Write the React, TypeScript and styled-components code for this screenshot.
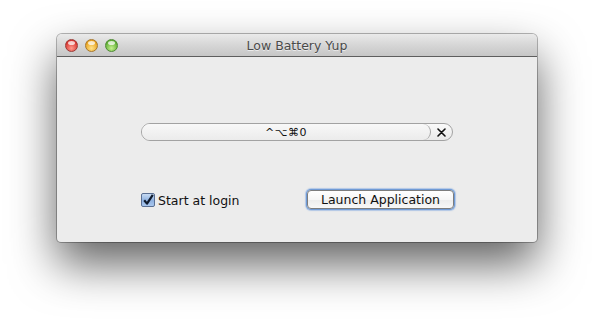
import React from "react";
import styled, { createGlobalStyle } from "styled-components";

const Global = createGlobalStyle`
  html, body { margin: 0; padding: 0; background: #ffffff; }
  body { font-family: "DejaVu Sans", "Liberation Sans", sans-serif; }
`;

const Page = styled.div`
  width: 594px;
  height: 321px;
  padding: 34px 0 0 57px;
  box-sizing: border-box;
  overflow: hidden;
`;

const Window = styled.div`
  width: 480px;
  height: 208px;
  border-radius: 5px 5px 4px 4px;
  background: #ececec;
  box-shadow: 0 0 0 1px rgba(0, 0, 0, 0.28), 0 22px 46px rgba(0, 0, 0, 0.62);
  display: flex;
  flex-direction: column;
  overflow: hidden;
`;

const TitleBar = styled.div`
  height: 23px;
  flex: none;
  box-sizing: border-box;
  border-bottom: 1px solid #5e5e5e;
  background: linear-gradient(#eaeaea, #d8d8d8 45%, #c6c6c6);
  display: flex;
  align-items: center;
  position: relative;
  padding-left: 8px;
  gap: 7px;
`;

const Light = styled.span<{ $c1: string; $c2: string; $edge: string }>`
  width: 13px;
  height: 13px;
  border-radius: 50%;
  box-sizing: border-box;
  border: 1px solid ${(p) => p.$edge};
  background: radial-gradient(circle at 50% 75%, ${(p) => p.$c2} 0%, ${(p) => p.$c1} 70%);
  position: relative;
  &::after {
    content: "";
    position: absolute;
    left: 2px;
    top: 1px;
    width: 7px;
    height: 4px;
    border-radius: 50%;
    background: rgba(255, 255, 255, 0.75);
  }
`;

const Title = styled.div`
  position: absolute;
  left: 0;
  right: 0;
  top: 0;
  line-height: 23px;
  text-align: center;
  font-size: 12.5px;
  color: #4a4a4a;
  text-shadow: 0 1px 0 rgba(255, 255, 255, 0.6);
  pointer-events: none;
`;

const Content = styled.div`
  flex: 1;
  padding: 66px 83px 0 84px;
  display: flex;
  flex-direction: column;
`;

const Recorder = styled.div`
  width: 312px;
  height: 18px;
  box-sizing: border-box;
  border: 1px solid #a2a2a2;
  border-radius: 9px;
  background: linear-gradient(#fafafa, #e9e9e9);
  display: flex;
  overflow: hidden;
`;

const KeyField = styled.div`
  flex: 1;
  border-right: 1px solid #a2a2a2;
  border-radius: 0 9px 9px 0;
  background: linear-gradient(#f8f8f8, #ebebeb);
  display: flex;
  align-items: center;
  justify-content: center;
  font-size: 11px;
  color: #111;
  letter-spacing: 0.5px;
`;

const ClearBtn = styled.div`
  width: 21px;
  display: flex;
  align-items: center;
  justify-content: center;
`;

const BottomRow = styled.div`
  margin-top: 48px;
  display: flex;
  align-items: center;
  justify-content: space-between;
  margin-right: -1px;
`;

const CheckLabel = styled.label`
  display: flex;
  align-items: center;
  gap: 3px;
  font-size: 12.5px;
  color: #111;
  margin-top: 1px;
`;

const Box = styled.span`
  width: 14px;
  height: 14px;
  box-sizing: border-box;
  border: 1px solid #5a6f92;
  border-radius: 2px;
  background: linear-gradient(#c7dbf3, #8fb1e0 55%, #a9c7ee);
  display: flex;
  align-items: center;
  justify-content: center;
`;

const Button = styled.button`
  width: 147px;
  height: 19px;
  margin: 1px;
  box-sizing: border-box;
  border: 1px solid #7d7d7d;
  border-radius: 4px;
  box-shadow: 0 0 0 1px #6f9ad6, 0 0 1px 2px rgba(130, 170, 225, 0.55);
  background: linear-gradient(#ffffff, #f6f6f6 50%, #ececec 51%, #f8f8f8);
  font-family: "DejaVu Sans", "Liberation Sans", sans-serif;
  font-size: 12.5px;
  color: #111;
  padding: 0;
  display: flex;
  align-items: center;
  justify-content: center;
`;

export default function App() {
  return (
    <>
      <Global />
      <Page>
        <Window>
          <TitleBar>
            <Light $c1="#d9342f" $c2="#ff9a8c" $edge="#9b3a36" />
            <Light $c1="#e8a21c" $c2="#ffe28a" $edge="#a8772a" />
            <Light $c1="#5fae33" $c2="#c4f08e" $edge="#4e8a34" />
            <Title>Low Battery Yup</Title>
          </TitleBar>
          <Content>
            <Recorder>
              <KeyField>^⌥⌘0</KeyField>
              <ClearBtn>
                <svg width="9" height="9" viewBox="0 0 9 9">
                  <path d="M1 1 L8 8 M8 1 L1 8" stroke="#111" strokeWidth="1.6" strokeLinecap="round" />
                </svg>
              </ClearBtn>
            </Recorder>
            <BottomRow>
              <CheckLabel>
                <Box>
                  <svg width="12" height="12" viewBox="0 0 12 12">
                    <path d="M2.2 6.2 L5 9.6 L10.8 0.8" fill="none" stroke="#0f1a2c" strokeWidth="2.2" strokeLinejoin="round" />
                  </svg>
                </Box>
                Start at login
              </CheckLabel>
              <Button>Launch Application</Button>
            </BottomRow>
          </Content>
        </Window>
      </Page>
    </>
  );
}
